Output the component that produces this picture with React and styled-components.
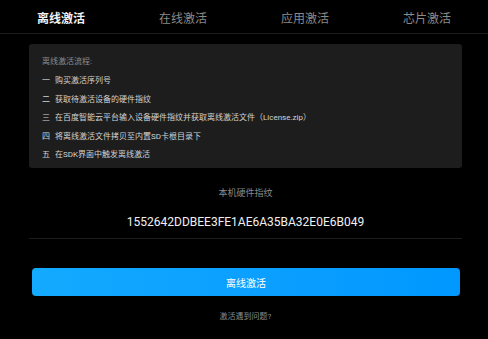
import React from "react";
import styled, { createGlobalStyle } from "styled-components";

const GlobalStyle = createGlobalStyle`
  html, body {
    margin: 0;
    padding: 0;
    background: #000;
  }
  body {
    font-family: Roboto, "Noto Sans CJK SC", sans-serif;
  }
`;

const Page = styled.div`
  width: 488px;
  height: 339px;
  background: #000;
  overflow: hidden;
`;

const TabBar = styled.div`
  display: flex;
  height: 33px;
  border-bottom: 1px solid #1c1c1c;
`;

const Tab = styled.div`
  flex: 1;
  display: flex;
  align-items: center;
  justify-content: center;
  font-size: 12px;
  font-weight: ${(p) => (p.$active ? 700 : 400)};
  color: ${(p) => (p.$active ? "#f2f2f2" : "#8a8a8a")};
  padding-top: 1px;
`;

const Content = styled.div`
  padding: 10px 26px 0 29px;
`;

const Panel = styled.div`
  background: #1d1d1d;
  border-radius: 3px;
  padding: 12px 13px 8px;
  height: 124px;
  box-sizing: border-box;
`;

const PanelTitle = styled.div`
  font-size: 8px;
  color: #8c8c8c;
  line-height: 12px;
  margin-bottom: 4px;
`;

const Step = styled.div`
  font-size: 8px;
  color: #d2d2d2;
  line-height: 18.5px;
  display: flex;
  gap: 5px;
`;

const Fingerprint = styled.div`
  display: flex;
  flex-direction: column;
  align-items: center;
  margin-top: 18px;
  border-bottom: 1px solid #1c1c1c;
  padding-bottom: 8px;
`;

const Label = styled.div`
  font-size: 9px;
  color: #8a8a8a;
  line-height: 14px;
`;

const Code = styled.div`
  font-size: 12px;
  color: #f0f0f0;
  margin-top: 15px;
  line-height: 15px;
`;

const Button = styled.button`
  display: block;
  margin: 29px 2px 0 3px;
  width: 428px;
  height: 28px;
  border: none;
  border-radius: 4px;
  background: linear-gradient(90deg, #13aaff 0%, #0a9eff 60%, #0098ff 100%);
  color: #fff;
  font-size: 10px;
  font-family: inherit;
`;

const Help = styled.div`
  text-align: center;
  font-size: 8px;
  color: #8a8a8a;
  margin-top: 14px;
`;

const steps = [
  ["一", "购买激活序列号"],
  ["二", "获取待激活设备的硬件指纹"],
  ["三", "在百度智能云平台输入设备硬件指纹并获取离线激活文件（License.zip）"],
  ["四", "将离线激活文件拷贝至内置SD卡根目录下"],
  ["五", "在SDK界面中触发离线激活"],
];

export default function App() {
  return (
    <Page>
      <GlobalStyle />
      <TabBar>
        <Tab $active>离线激活</Tab>
        <Tab>在线激活</Tab>
        <Tab>应用激活</Tab>
        <Tab>芯片激活</Tab>
      </TabBar>
      <Content>
        <Panel>
          <PanelTitle>离线激活流程:</PanelTitle>
          {steps.map(([n, t]) => (
            <Step key={n}>
              <span>{n}</span>
              <span>{t}</span>
            </Step>
          ))}
        </Panel>
        <Fingerprint>
          <Label>本机硬件指纹</Label>
          <Code>1552642DDBEE3FE1AE6A35BA32E0E6B049</Code>
        </Fingerprint>
        <Button>离线激活</Button>
        <Help>激活遇到问题?</Help>
      </Content>
    </Page>
  );
}
